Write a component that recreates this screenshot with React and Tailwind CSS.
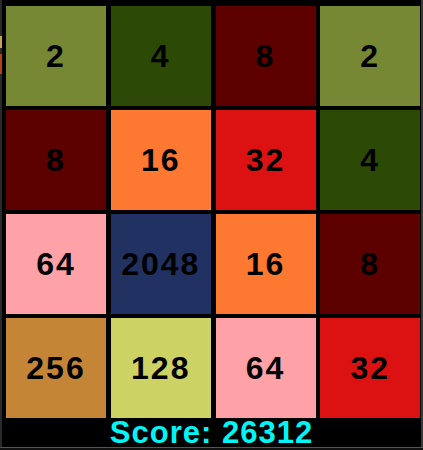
const tiles = [
  [2, 4, 8, 2],
  [8, 16, 32, 4],
  [64, 2048, 16, 8],
  [256, 128, 64, 32],
];

const tileColor = {
  2: 'bg-[#778835]',
  4: 'bg-[#2c4a06]',
  8: 'bg-[#5c0000]',
  16: 'bg-[#fd7831]',
  32: 'bg-[#dc1212]',
  64: 'bg-[#fea2a8]',
  128: 'bg-[#cdd264]',
  256: 'bg-[#c58536]',
  2048: 'bg-[#213161]',
};

const Tile = ({ value }) => (
  <div
    className={`w-[100px] h-[100px] flex items-center justify-center text-black text-[32px] font-bold tracking-[2px] ${tileColor[value]}`}
  >
    {value}
  </div>
);

export default function App() {
  return (
    <div
      className="w-[423px] h-[450px] bg-[#1b1b1b] flex flex-col overflow-hidden"
      style={{ fontFamily: '"Liberation Sans", Arial, sans-serif' }}
    >
      <div className="flex h-[447px]">
        {/* left strip from the desktop behind the window */}
        <div className="w-[2px] flex flex-col bg-[#2a2a2a]">
          <div className="h-[36px]" />
          <div className="h-[12px] bg-[#c9a25a]" />
          <div className="h-[6px]" />
          <div className="h-[20px] bg-[#b2401c]" />
        </div>

        <div className="w-[419px] bg-black flex flex-col">
          <div className="grid grid-cols-4 gap-[4px] pl-[4px] pt-[6px]">
            {tiles.flat().map((v, i) => (
              <Tile key={i} value={v} />
            ))}
          </div>
          <div className="h-[29px] flex items-center justify-center text-[#00f6f6] text-[31px] font-bold tracking-[1px] leading-none">
            Score:&nbsp;26312
          </div>
        </div>

        <div className="w-[2px] bg-[#3a3a3a]" />
      </div>
      <div className="h-[1px] bg-[#555555]" />
      <div className="flex-1 bg-[#111111]" />
    </div>
  );
}
